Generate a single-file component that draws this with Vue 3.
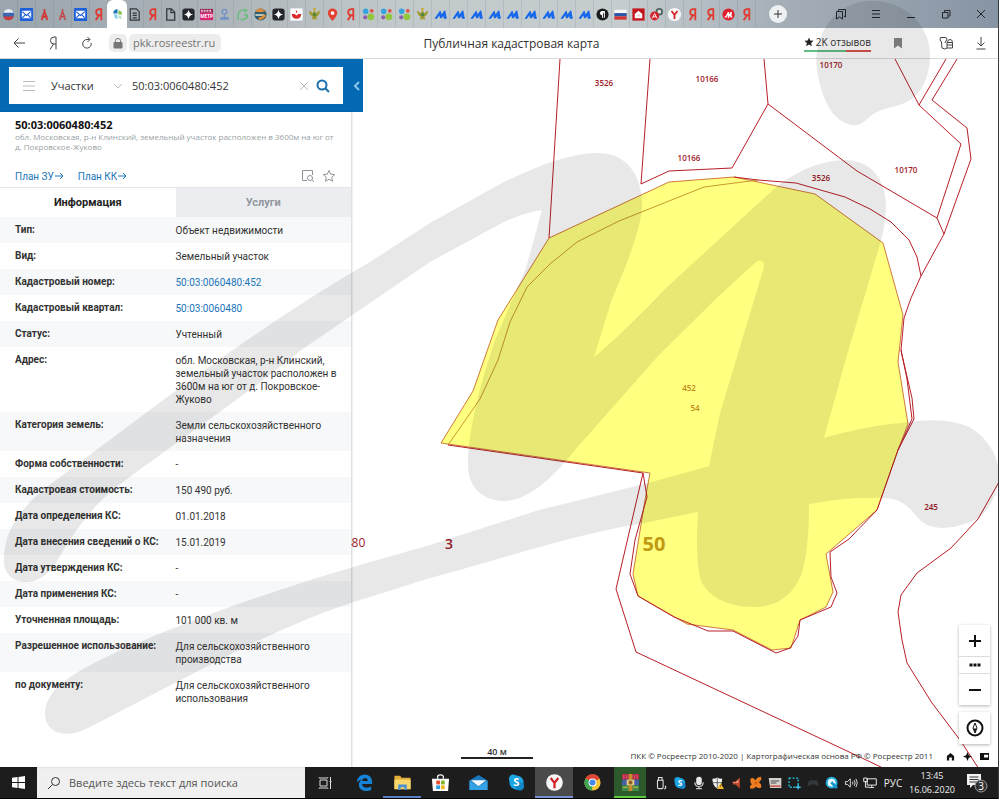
<script setup>
import { ref } from 'vue'

const tabIcons = [
  'flagball', 'mail', 'compass', 'compassdim', 'mail', 'ya', 'pkk', 'doclines', 'ya', 'doc',
  'spark', 'metr', 'person', 'arc', 'globe', 'spark', 'bowl', 'emblem', 'pin', 'ya',
  'dots', 'dots', 'dots', 'emblem', 'peak', 'peak', 'peak', 'peak', 'peak', 'peak',
  'peak', 'peak', 'peak', 'para', 'flag', 'house', 'redball', 'ybrowser', 'ya', 'ya',
  'redm', 'ya'
]
const activeTab = ref(6)

const searchType = ref('Участки')
const query = ref('50:03:0060480:452')
const taskQuery = ref('')
const section = ref('info')

const rows = [
  { label: 'Тип:', value: 'Объект недвижимости' },
  { label: 'Вид:', value: 'Земельный участок' },
  { label: 'Кадастровый номер:', value: '50:03:0060480:452', link: true },
  { label: 'Кадастровый квартал:', value: '50:03:0060480', link: true },
  { label: 'Статус:', value: 'Учтенный' },
  { label: 'Адрес:', value: 'обл. Московская, р-н Клинский, земельный участок расположен в 3600м на юг от д. Покровское-Жуково' },
  { label: 'Категория земель:', value: 'Земли сельскохозяйственного назначения' },
  { label: 'Форма собственности:', value: '-' },
  { label: 'Кадастровая стоимость:', value: '150 490 руб.' },
  { label: 'Дата определения КС:', value: '01.01.2018' },
  { label: 'Дата внесения сведений о КС:', value: '15.01.2019' },
  { label: 'Дата утверждения КС:', value: '-' },
  { label: 'Дата применения КС:', value: '-' },
  { label: 'Уточненная площадь:', value: '101 000 кв. м' },
  { label: 'Разрешенное использование:', value: 'Для сельскохозяйственного производства' },
  { label: 'по документу:', value: 'Для сельскохозяйственного использования' }
]

const parcel = '549,179 669,123 734,118 815,135 883,184 903,256 898,303 908,365 898,391 877,451 826,495 833,533 826,548 800,561 791,589 772,591 733,571 687,565 638,537 633,515 645,441 650,414 441,384 473,332 498,261'

const borders = [
  '560,0 549,179',
  '650,0 641,125 669,112 732,109 768,45 764,0',
  '768,45 857,112 937,159 944,175',
  '895,0 919,46 961,85 937,159',
  '946,0 919,46',
  '957,0 932,41 967,69 971,100 944,175 921,217',
  '734,118 758,121 796,124 845,138 870,150 891,163 909,181 917,198 921,217',
  '643,414 616,530 636,593 862,699 885,710',
  '999,423 978,460 951,489 917,514 901,536 898,553 902,581 907,604 932,644 960,681 979,710',
  '921,217 911,239 904,259 901,291 902,296 912,339 914,360 898,391 877,451 849,480 830,493 831,518 837,534 831,548 800,561 798,577 790,589 776,594 733,572 708,572 674,558 638,537 630,515 635,481 647,438 643,414 448,386',
  '901,291 907,320 912,360 898,391'
]
const innerBorder = '758,121 704,128 619,162 577,183 550,205 527,228 510,263 498,301 480,340 448,386'

const mapLabels = [
  { x: 604, y: 27, text: '3526' },
  { x: 707, y: 23, text: '10166' },
  { x: 831, y: 9, text: '10170' },
  { x: 689, y: 102, text: '10166' },
  { x: 906, y: 114, text: '10170' },
  { x: 821, y: 122, text: '3526' },
  { x: 931, y: 451, text: '245' },
  { x: 689, y: 332, text: '452', kind: 'inside' },
  { x: 695, y: 352, text: '54', kind: 'inside' },
  { x: 355, y: 488, text: '480', kind: 'block' },
  { x: 449, y: 490, text: '3', kind: 'district' },
  { x: 654, y: 492, text: '50', kind: 'region' }
]

const apps = [
  { id: 'edge', title: 'Microsoft Edge' },
  { id: 'explorer', title: 'Проводник', state: 'open' },
  { id: 'store', title: 'Microsoft Store' },
  { id: 'mailapp', title: 'Почта' },
  { id: 'skype', title: 'Skype' },
  { id: 'ybrowser', title: 'Yandex', state: 'current' },
  { id: 'chrome', title: 'Google Chrome' },
  { id: 'rar', title: 'WinRAR', state: 'green' }
]
const tray = ['usb', 'skype', 'mic', 'shield', 'horn', 'avast', 'scanner', 'snip', 'pad', 'quick', 'volume', 'net']
</script>

<template>
  <div class="screen">
    <!-- shared icon shapes -->
    <svg class="sprite" aria-hidden="true">
      <symbol id="flagball" viewBox="0 0 16 16">
        <circle cx="8" cy="8" r="6" fill="#3d66b0" />
        <path d="M2.400 6a6 6 0 0 1 11.200 0z" fill="#e9edf2" />
        <path d="M2.400 10.200h11.200a6 6 0 0 1-11.200 0z" fill="#d03a3a" />
      </symbol>
      <symbol id="mail" viewBox="0 0 16 16">
        <rect x="1" y="1" width="14" height="14" rx="1" fill="#1d5fd8" />
        <rect x="3" y="4" width="10" height="8" fill="#fff" />
        <path d="M3.500 5 8 9l4.500-4M3.500 11.500l3-3M12.500 11.500l-3-3" fill="none" stroke="#1d5fd8" stroke-width="1.200" />
      </symbol>
      <symbol id="compass" viewBox="0 0 16 16">
        <path d="M8 2v2.500M8 4.500 5 14M8 4.500l3 9.500M5 9.500q3 2 6 0" fill="none" stroke="#cf3a35" stroke-width="1.900" />
      </symbol>
      <symbol id="compassdim" viewBox="0 0 16 16">
        <path d="M8 2v2.500M8 4.500 5 14M8 4.500l3 9.500M5 9.500q3 2 6 0" fill="none" stroke="#c04a4c" stroke-width="1.600" />
      </symbol>
      <symbol id="ya" viewBox="0 0 16 16">
        <path d="M11 14V2.200H9Q5.500 2.200 5.500 5.500T9 8.800h2M8.500 9 5 14" fill="none" stroke="#e0392f" stroke-width="1.900" />
      </symbol>
      <symbol id="pkk" viewBox="0 0 16 16">
        <path d="M8 2v5H3.500A5 5 0 0 1 8 2z" fill="#1976b8" />
        <path d="M9 3.500Q12.500 4 13 8H9z" fill="#7fc04b" />
        <path d="M8 8v5Q4.500 12.500 4 8z" fill="#8ed0ea" />
        <path d="M9 9h2.500l1 4-3.500-1.500z" fill="#b9dccb" />
      </symbol>
      <symbol id="doclines" viewBox="0 0 16 16">
        <path d="M3.500 2h6.500l3 3v9H3.500zM6 6.500h4.500M6 9h4.500M6 11.500h4.500" fill="none" stroke="#33393e" stroke-width="1.300" />
      </symbol>
      <symbol id="doc" viewBox="0 0 16 16">
        <path d="M4 2h5l3.500 3.500V14H4zM8.500 2v4h4" fill="none" stroke="#33393e" stroke-width="1.400" />
      </symbol>
      <symbol id="spark" viewBox="0 0 16 16">
        <rect x="1.500" y="1.500" width="13" height="13" rx="3" fill="#23272b" />
        <path d="M8 3Q8.700 7.300 13 8 8.700 8.700 8 13 7.300 8.700 3 8 7.300 7.300 8 3z" fill="#fff" />
      </symbol>
      <symbol id="metr" viewBox="0 0 16 16">
        <path d="M1 2h14v4H1z" fill="#8d2050" />
        <path d="M2 4h12" stroke="#f0c5d6" stroke-width="2" stroke-dasharray="2 1" />
        <path d="M1 6h14v8H1z" fill="#d92372" />
      </symbol>
      <symbol id="person" viewBox="0 0 16 16">
        <circle cx="8" cy="5" r="2.500" fill="none" stroke="#7191ca" stroke-width="1.500" />
        <path d="M8 7.500v4M3.500 13q0-2 3-2h3q3 0 3 2z" fill="#7191ca" stroke="#7191ca" />
      </symbol>
      <symbol id="arc" viewBox="0 0 16 16">
        <path d="M3.500 14Q1.500 4 9 3h4M13 3l-3 3M6 13q4 1.500 7-2V8.500H9.500" fill="none" stroke="#6dbb7e" stroke-width="1.700" />
      </symbol>
      <symbol id="globe" viewBox="0 0 16 16">
        <circle cx="8" cy="8" r="6.500" fill="#2e5d73" />
        <path d="M2 5q3-4 7-3.500l5 3-6 1z" fill="#d98a3a" />
        <path d="M2 7.500h10v2H3z" fill="#b9c4bd" />
        <path d="M6 12.500q4 0 7-4" stroke="#e98b2f" stroke-width="2.500" />
      </symbol>
      <symbol id="bowl" viewBox="0 0 16 16">
        <path d="M1.500 1.500h13v13h-13z" fill="#fff" />
        <path d="M3 7.500h3l2 1.500 2-1.500h3q0 5-5 5t-5-5zM7 4l1 3 1-3" fill="#dd2c2c" />
      </symbol>
      <symbol id="emblem" viewBox="0 0 16 16">
        <path d="M2 4q3 .5 4 3l2-4 2 4q1-2.500 4-3-.5 5-4 6l1 3H5l1-3Q2.500 9 2 4z" fill="#a59b31" />
        <circle cx="8" cy="8" r="2" fill="#548b40" />
        <path d="M6.500 2h3M8 1v3" stroke="#d2a92c" stroke-width="1.500" />
      </symbol>
      <symbol id="pin" viewBox="0 0 16 16">
        <path d="M8 15Q3 9.500 3 6.500a5 5 0 0 1 10 0Q13 9.500 8 15z" fill="#e3402f" />
        <circle cx="8" cy="6.500" r="2" fill="#fff" />
      </symbol>
      <symbol id="dots" viewBox="0 0 16 16">
        <circle cx="5" cy="4.500" r="3" fill="#35a3dc" />
        <circle cx="11.500" cy="4" r="2" fill="#e0524a" />
        <circle cx="4.500" cy="11" r="2.200" fill="#8e5fb0" />
        <circle cx="10.500" cy="10.500" r="3.700" fill="#92c83e" />
      </symbol>
      <symbol id="peak" viewBox="0 0 16 16">
        <path d="M1.500 12.500 7 4.500q1-1 1.300.3l.8 3L12 4q1-1 1.200.3l1.600 8.200h-3.300L11 9.500 9.300 12H7.500l-.8-3-2.400 3.500z" fill="#1768ea" />
      </symbol>
      <symbol id="para" viewBox="0 0 16 16">
        <circle cx="8" cy="8" r="6.500" fill="#1b1d1f" />
        <path d="M8 5v6.500M10 5v6.500M10.500 4.800H7.500a1.500 1.500 0 0 0 0 3.500" fill="#fff" stroke="#fff" />
      </symbol>
      <symbol id="flag" viewBox="0 0 16 16">
        <path d="M1.500 3h13v3.500h-13z" fill="#f7f7f7" />
        <path d="M1.500 6.500h13V10h-13z" fill="#2d56a8" />
        <path d="M1.500 10h13v3.500h-13z" fill="#d33430" />
      </symbol>
      <symbol id="house" viewBox="0 0 16 16">
        <path d="M1.500 1.500h13v13h-13z" fill="#c5161d" />
        <path d="M4 7.500 8 4l4 3.500V12H4z" fill="#fff" />
        <path d="M6.500 8h3v2h-3z" fill="#f3c9ca" />
      </symbol>
      <symbol id="redball" viewBox="0 0 16 16">
        <circle cx="11" cy="5" r="4" fill="#50635e" />
        <circle cx="11" cy="5" r="2" fill="#dfe5e2" />
        <circle cx="6" cy="9.500" r="4.800" fill="#d5222b" />
        <path d="M3.500 12 6 7l2.500 5M4.500 10.500h3" fill="none" stroke="#fff" />
      </symbol>
      <symbol id="ybrowser" viewBox="0 0 16 16">
        <circle cx="8" cy="8" r="7" fill="#f7f7f7" />
        <path d="M4.800 4.200 8 8.300l3.200-4.100M8 8v4.800" fill="none" stroke="#d2232a" stroke-width="1.900" />
      </symbol>
      <symbol id="redm" viewBox="0 0 16 16">
        <circle cx="8" cy="8" r="6.500" fill="#df1f2d" />
        <path d="M4 10.500h1.500l2.500-5v5l3-5-.5 5H12" fill="none" stroke="#fff" stroke-width="1.400" />
      </symbol>

      <symbol id="edge" viewBox="0 0 20 20">
        <path d="M2 9Q3.500 1.500 10.500 1.500 18 2 18 9.500v2H7.500q.5 4 5 4 2.500 0 4.500-1.200v3.500q-2.500 1.200-5.500 1.200-7.500-.5-7.500-7 .5-4 4-5.500-4 .5-6 3.500zM7.500 8.300h6q-.2-3-3-3-2.500.2-3 3z" fill="#1583d8" />
      </symbol>
      <symbol id="explorer" viewBox="0 0 20 20">
        <path d="M1.500 3h6l1.500 2h9.500v12h-17z" fill="#e3ae38" />
        <path d="M1.500 7h17v10h-17z" fill="#f8d86c" />
        <path d="M5.500 18v-6h9v6h-2.500v-3H8v3z" fill="#4a90d2" />
      </symbol>
      <symbol id="store" viewBox="0 0 20 20">
        <path d="M7 6V4q0-2 3-2t3 2v2" fill="none" stroke="#fff" stroke-width="1.300" />
        <path d="M1 6h18l-1 13H2z" fill="#fff" />
        <path d="M5.500 8h4v4h-4z" fill="#e7502c" />
        <path d="M10.500 8h4v4h-4z" fill="#7eb62b" />
        <path d="M5.500 13h4v4h-4z" fill="#2a9fe0" />
        <path d="M10.500 13h4v4h-4z" fill="#f3b41c" />
      </symbol>
      <symbol id="mailapp" viewBox="0 0 20 20">
        <path d="M.5 8 10 2l9.500 6v10H.5z" fill="#1877bd" />
        <path d="M2 7.500h16L10 14z" fill="#f2f8fc" />
        <path d="M.5 8 10 14.500 19.500 8v10H.5z" fill="#35a3e3" />
      </symbol>
      <symbol id="skype" viewBox="0 0 20 20">
        <circle cx="10" cy="10" r="7.500" fill="#1ba5e2" />
        <circle cx="6.500" cy="6" r="4.500" fill="#1ba5e2" />
        <circle cx="13.500" cy="14" r="4.500" fill="#1287c7" />
      </symbol>
      <symbol id="chrome" viewBox="0 0 20 20">
        <circle cx="10" cy="10" r="8.500" fill="#f4c534" />
        <path d="M10 10 2.600 5.800A8.500 8.500 0 0 1 17.600 6z" fill="#df4534" />
        <path d="M10 10 2.600 5.800A8.500 8.500 0 0 0 9.500 18.500z" fill="#3fa455" />
        <circle cx="10" cy="10" r="4.200" fill="#fff" />
        <circle cx="10" cy="10" r="3.200" fill="#4488e8" />
      </symbol>
      <symbol id="rar" viewBox="0 0 20 20">
        <path d="M1 1h18v6H1z" fill="#b3294b" />
        <path d="M1 7h18v6H1z" fill="#4660a8" />
        <path d="M1 13h18v6H1z" fill="#3e8b49" />
        <path d="M8 1h4v18H8z" fill="#c88a2f" />
        <path d="M3 2v4M6 2v4M14 2v4M17 2v4" stroke="#df5d69" />
        <path d="M6 7h8v6H6z" fill="#ead18a" />
        <path d="M8 8h4v4H8z" fill="#8d6126" />
        <path d="M2 15h5M13 15h5" stroke="#d7c645" />
      </symbol>

      <symbol id="usb" viewBox="0 0 20 20">
        <path d="M5 6h8v10q0 2-2 2H7q-2 0-2-2zM6.500 6V2h5v4M16 14q2 3-1 5" fill="none" stroke="#e4e4e4" stroke-width="1.500" />
      </symbol>
      <symbol id="mic" viewBox="0 0 20 20">
        <rect x="6" y="1" width="8" height="12" rx="4" fill="#e8e8e8" />
        <path d="M4 9q0 6 6 6t6-6M10 15v3M6 18h8" fill="none" stroke="#cfcfcf" stroke-width="1.700" />
      </symbol>
      <symbol id="shield" viewBox="0 0 20 20">
        <path d="M2 4q5 0 7-2 2 2 7 2 0 10-7 14Q2 14 2 4z" fill="#f1f1f1" />
        <path d="M9 3v14M2.500 9.500h13" stroke="#333" />
        <path d="m13.500 10 5 8.500h-10z" fill="#f4b82d" />
        <path d="M13.500 13v2.500" stroke="#4b3300" />
      </symbol>
      <symbol id="horn" viewBox="0 0 20 20">
        <path d="M4 8h4l6-6v16l-6-6H4z" fill="#c7492f" />
        <path d="M4 9h4l4-4v5H4z" fill="#eb8e70" />
      </symbol>
      <symbol id="avast" viewBox="0 0 20 20">
        <path d="M2 4q4-3 7 2l1-1q2-4 7-4 2 3-1 6l-2 2q5 3 3 8-5 1-7-2-3 4-8 3-2-4 2-6Q1 9 2 4z" fill="#ef7d22" />
        <circle cx="10" cy="10" r="2.500" fill="#d9630f" />
      </symbol>
      <symbol id="scanner" viewBox="0 0 20 20">
        <path d="M1 3h18v14H3z" fill="#d4d0ce" />
        <path d="M4 7h12M4 10h8" stroke="#4d4d4d" stroke-width="1.500" />
        <path d="M3 14.500h15" stroke="#c8493b" stroke-width="2" />
      </symbol>
      <symbol id="snip" viewBox="0 0 20 20">
        <path d="M3 3h13v13H3z" fill="none" stroke="#24b4cf" stroke-width="2" stroke-dasharray="3 2" />
        <path d="M16 12v7M12.500 16h7" stroke="#3cc3ea" stroke-width="2" />
      </symbol>
      <symbol id="pad" viewBox="0 0 20 20">
        <path d="M2 14q1-8 4-8h8q3 0 4 8-3 1-4-2H6q-1 3-4 2z" fill="#34383d" />
      </symbol>
      <symbol id="quick" viewBox="0 0 20 20">
        <circle cx="9.500" cy="9.500" r="7" fill="#eefaff" stroke="#25aee0" stroke-width="3" />
        <path d="m9 9 8 8" stroke="#1797cc" stroke-width="4" />
      </symbol>
      <symbol id="volume" viewBox="0 0 20 20">
        <path d="M2 8h3l4-4v12l-4-4H2zM12 8q1.500 2 0 4M14.500 6q3 4 0 8M17 4q4 6 0 12" fill="none" stroke="#e9e9e9" stroke-width="1.300" />
      </symbol>
      <symbol id="net" viewBox="0 0 20 20">
        <path d="M6 4h13v9H6zM12.500 13v3M9 16.500h7M1 3h5v5H1zM3.500 8v8H9" fill="none" stroke="#e9e9e9" stroke-width="1.400" />
      </symbol>
    </svg>

    <header class="tabstrip">
      <nav class="tabs" aria-label="Вкладки">
        <button
          v-for="(icon, i) in tabIcons"
          :key="i"
          type="button"
          class="tab"
          :class="{ active: i === activeTab }"
          :aria-label="'Вкладка ' + (i + 1)"
          @click="activeTab = i"
        >
          <svg class="tab-icon" viewBox="0 0 16 16">
            <use :href="'#' + icon" />
            <text v-if="icon === 'metr'" x="8" y="12" class="glyph metr">МЕТР</text>
          </svg>
        </button>
      </nav>
      <button type="button" class="new-tab" aria-label="Новая вкладка">
        <svg viewBox="0 0 12 12"><path d="M6 2v8M2 6h8" /></svg>
      </button>
      <div class="window-buttons">
        <button type="button" aria-label="Коллекции">
          <svg viewBox="0 0 14 14"><path d="M4.500 4V2.500h7V10L10 9M2.500 4.500h6V12l-3-2-3 2z" /></svg>
        </button>
        <button type="button" aria-label="Меню">
          <svg viewBox="0 0 14 14"><path d="M3 3.500h8M3 7h8M3 10.500h8" /></svg>
        </button>
        <button type="button" aria-label="Свернуть">
          <svg viewBox="0 0 14 14"><path d="M3 10.500h8" /></svg>
        </button>
        <button type="button" aria-label="Развернуть">
          <svg viewBox="0 0 14 14"><path d="M5.500 5V3.500h5.500V9H9.500M3.500 5.500H9V11H3.500z" /></svg>
        </button>
        <button type="button" aria-label="Закрыть">
          <svg viewBox="0 0 14 14"><path d="m3 3 8 8M11 3l-8 8" /></svg>
        </button>
      </div>
    </header>

    <div class="toolbar">
      <div class="tools-left">
        <button type="button" class="tool" aria-label="Назад">
          <svg viewBox="0 0 16 16"><path d="M14 8H3M7.500 3.500 3 8l4.500 4.500" /></svg>
        </button>
        <button type="button" class="tool" aria-label="Яндекс">
          <svg viewBox="0 0 16 16"><path d="M11 14.500V2H9Q5.500 2 5.500 5.500T9 9h2M8.500 9 5 14.500" /></svg>
        </button>
        <button type="button" class="tool" aria-label="Обновить">
          <svg viewBox="0 0 16 16"><path d="M12.200 8A4.300 4.300 0 1 1 8 4.500h2.500M8.500 2l2.500 2.500L8.500 7" /></svg>
        </button>
        <span class="lock">
          <svg viewBox="0 0 12 12"><path d="M2 5.500h8V11H2z" fill="#777" /><path d="M3.500 6V3.500Q3.500 1.500 6 1.500t2.500 2V6" /></svg>
        </span>
        <a class="host" href="#">pkk.rosreestr.ru</a>
      </div>
      <h1 class="page-title">Публичная кадастровая карта</h1>
      <div class="tools-right">
        <a class="reviews" href="#">
          <svg viewBox="0 0 12 12"><path d="m6 .5 1.500 3.700 4 .3-3 2.600 1 3.900L6 8.900 2.500 11l1-3.900-3-2.600 4-.3z" fill="#222" /></svg>
          2K отзывов
        </a>
        <button type="button" class="tool" aria-label="Закладка">
          <svg viewBox="0 0 16 16"><path d="M4 3h8v10.500l-4-3-4 3z" class="solid" /></svg>
        </button>
        <button type="button" class="tool wide" aria-label="Расширения">
          <svg viewBox="0 0 16 16"><path d="M8 2.500H2.500Q1 5 3.500 7l.5 6q3 2 5 0M8 2.500q2 1.500 0 3.500L7 8M9 7.500h5.500V13H9zM9.500 7.500q0-3 2.500-3t2.500 3M9 10h5.500" /></svg>
        </button>
        <button type="button" class="tool" aria-label="Загрузки">
          <svg viewBox="0 0 16 16"><path d="M8 2v9M4.500 7.500 8 11l3.500-3.500M3.500 14h9" /></svg>
        </button>
      </div>
    </div>

    <main class="workspace">
      <svg class="map">
        <polygon :points="parcel" class="parcel" />
        <polyline :points="innerBorder" class="inner" />
        <polyline v-for="(line, i) in borders" :key="i" :points="line" class="border" />
        <text
          v-for="label in mapLabels"
          :key="label.text + label.x"
          :x="label.x" :y="label.y"
          class="map-label"
          :class="label.kind"
        >{{ label.text }}</text>
      </svg>

      <aside class="sidebar">
        <form class="search" @submit.prevent>
          <div class="search-box">
            <button type="button" class="plain" aria-label="Меню карты">
              <svg class="icon-burger" viewBox="0 0 14 14"><path d="M1 2.500h12M1 7h12M1 11.500h12" /></svg>
            </button>
            <div class="type-wrap">
              <select v-model="searchType" aria-label="Тип объекта">
                <option>Участки</option>
                <option>ОКС</option>
              </select>
              <svg class="icon-chevron" viewBox="0 0 10 10"><path d="m1 3 4 4 4-4" /></svg>
            </div>
            <input v-model="query" type="text" aria-label="Поиск по номеру">
            <button type="button" class="plain" aria-label="Очистить" @click="query = ''">
              <svg class="icon-clear" viewBox="0 0 10 10"><path d="m1 1 8 8M9 1 1 9" /></svg>
            </button>
            <button type="submit" class="plain" aria-label="Найти">
              <svg class="icon-search" viewBox="0 0 14 14"><circle cx="6" cy="6" r="4.500" /><path d="m9 9 4 4" /></svg>
            </button>
          </div>
          <button type="button" class="plain collapse" aria-label="Скрыть панель">
            <svg viewBox="0 0 8 12"><path d="M6 2 2 6l4 4" /></svg>
          </button>
        </form>

        <section class="panel">
          <div class="summary">
            <h2>50:03:0060480:452</h2>
            <p>обл. Московская, р-н Клинский, земельный участок расположен в 3600м на юг от д. Покровское-Жуково</p>
            <div class="plan-row">
              <a href="#">План ЗУ<svg viewBox="0 0 10 10"><path d="M1 5h8M6 2l3 3-3 3" /></svg></a>
              <a href="#">План КК<svg viewBox="0 0 10 10"><path d="M1 5h8M6 2l3 3-3 3" /></svg></a>
              <div class="plan-tools">
                <button type="button" class="plain" aria-label="Показать на карте">
                  <svg viewBox="0 0 14 14"><path d="M6 11.500H1.500v-10h10V6" /><circle cx="9" cy="9" r="2.500" /><path d="m11 11 2 2" /></svg>
                </button>
                <button type="button" class="plain" aria-label="В избранное">
                  <svg viewBox="0 0 14 14"><path d="m7 1.500 1.700 3.700 4 .4-3 2.700.9 4L7 10.300l-3.600 2 .9-4-3-2.700 4-.4z" /></svg>
                </button>
              </div>
            </div>
          </div>

          <div class="sections">
            <button type="button" :class="{ on: section === 'info' }" @click="section = 'info'">Информация</button>
            <button type="button" :class="{ on: section === 'services' }" @click="section = 'services'">Услуги</button>
          </div>

          <table class="facts">
            <tbody>
              <tr v-for="row in rows" :key="row.label">
                <th scope="row">{{ row.label }}</th>
                <td>
                  <a v-if="row.link" href="#">{{ row.value }}</a>
                  <template v-else>{{ row.value }}</template>
                </td>
              </tr>
            </tbody>
          </table>
        </section>
      </aside>

      <div class="map-controls">
        <div class="zoom">
          <button type="button" aria-label="Приблизить">
            <svg viewBox="0 0 14 14"><path d="M7 1v12M1 7h12" /></svg>
          </button>
          <button type="button" class="short" aria-label="Масштаб">
            <svg viewBox="0 0 14 14"><path d="M1.500 7h3M5.500 7h3M9.500 7h3" class="fat" /></svg>
          </button>
          <button type="button" aria-label="Отдалить">
            <svg viewBox="0 0 14 14"><path d="M1 7h12" /></svg>
          </button>
        </div>
        <button type="button" class="locate" aria-label="Компас">
          <svg viewBox="0 0 18 18"><circle cx="9" cy="9" r="7.500" /><path d="m9 4 2 5-2 5-2-5z" class="needle" /><path d="m7.500 9.500 1.500 4 1.500-4z" class="ink" /></svg>
        </button>
      </div>

      <div class="scale">40 м</div>

      <footer class="credits">
        <span>ПКК © Росреестр 2010-2020 | Картографическая основа РФ © Росреестр 2011</span>
        <svg viewBox="0 0 10 10"><path d="M1 9.500V4.500L5 1l4 3.500v5H6.500V6h-3v3.500z" /></svg>
        <svg viewBox="0 0 10 10"><path d="M5 0 6.500 3.500 10 5 6.500 6.500 5 10 3.500 6.500 0 5l3.500-1.500z" /></svg>
        <svg viewBox="0 0 10 10"><path d="M0 1h10v8H0zM4.500 3v3H9V3z" fill-rule="evenodd" /></svg>
      </footer>
    </main>

    <footer class="taskbar">
      <button type="button" class="start" aria-label="Пуск">
        <svg viewBox="0 0 14 14"><path d="M0 2 6 1v5.500H0zM7 1l7-1v6.500H7zM0 7.500h6V13l-6-1zM7 7.500h7V14l-7-1z" fill="#fff" /></svg>
      </button>
      <label class="task-search">
        <svg viewBox="0 0 14 14"><circle cx="8.500" cy="5.500" r="4" /><path d="M5.500 8.500 1 13" /></svg>
        <input v-model="taskQuery" type="text" placeholder="Введите здесь текст для поиска">
      </label>
      <button type="button" class="task-view" aria-label="Представление задач">
        <svg viewBox="0 0 14 14"><path d="M2 4h7v6H2zM1 1.500V2h9v-.5M1 12.500V12h9v.5M12.500 1v12M11.500 5.500h2" /></svg>
      </button>
      <button
        v-for="app in apps"
        :key="app.id"
        type="button"
        class="app"
        :class="app.state"
        :aria-label="app.title"
      >
        <svg viewBox="0 0 20 20">
          <use :href="'#' + app.id" />
          <text v-if="app.id === 'skype'" x="10" y="14" class="glyph skype">S</text>
        </svg>
      </button>
      <div class="tray">
        <svg v-for="item in tray" :key="item" viewBox="0 0 20 20">
          <use :href="'#' + item" />
          <text v-if="item === 'skype'" x="10" y="14" class="glyph skype">S</text>
        </svg>
      </div>
      <button type="button" class="lang">РУС</button>
      <time class="clock" datetime="2020-06-16T13:45">13:45<br>16.06.2020</time>
      <button type="button" class="notices" aria-label="Уведомления">
        <svg viewBox="0 0 24 22">
          <path d="M2 2h14v11H8l-3 3v-3H2z" fill="#f3f3f3" />
          <path d="M4.500 5h9M4.500 7.500h9M4.500 10h9" stroke="#333" />
          <circle cx="16" cy="14" r="6" fill="#333" stroke="#9a9a9a" />
          <text x="16" y="18" class="glyph count">3</text>
        </svg>
      </button>
    </footer>

    <!-- translucent mark over the whole screen -->
    <svg class="overlay" aria-hidden="true">
      <path
        d="M4 557C5 520 35 495 60 477C150 410 260 325 370 262L430 223L502 183C540 165 570 153 600 153
           C627 154 642 175 642 205C642 230 622 275 611 302L594 357C610 345 645 310 666 288L775 188
           C800 168 825 160 847 160C873 162 885 180 886 205C886 230 878 250 873 268L847 355L824 438
           C855 429 885 424 902 423C930 418 960 420 974 430C992 443 999 460 999 476C997 500 985 518 967 523
           C950 530 930 530 920 520C912 512 905 498 884 498C850 497 830 501 809 504
           C809 535 807 555 802 573C792 598 775 607 753 607C720 607 701 590 699 573C696 550 697 530 698 512
           L644 523C570 535 500 560 430 578L370 597C320 612 280 630 233 653L90 727C62 742 44 730 45 713
           C46 690 70 675 100 660C180 622 280 588 370 562L430 545L539 510L648 483L709 466L720 413L742 340L764 267
           Q764 258 756 262L720 295L659 355L575 450C555 475 530 501 503 501C480 500 468 485 468 465
           C468 430 480 385 495 340L526 268L542 210Q525 212 502 223L430 262L370 303L300 351
           C250 392 180 440 123 482C97 500 75 530 60 556C48 578 34 583 23 582C8 580 3 570 4 557Z"
      />
      <path d="M817 70C812 35 835 2 870 1C905 0 930 25 930 55C930 85 915 103 892 107C865 112 868 127 851 125C830 120 821 95 817 70Z" />
    </svg>
  </div>
</template>

<style>
body {
  margin: 0;
}
</style>

<style scoped>
.screen {
  position: relative;
  display: flex;
  flex-direction: column;
  height: 100vh;
  box-sizing: border-box;
  border-right: 1px solid #343a40;
  overflow: hidden;
  background: #fff;
  color: #333;
  font-family: "Open Sans", "Noto Sans", sans-serif;
  font-size: 11px;
}
.sprite {
  position: absolute;
  width: 0;
  height: 0;
}
button,
input,
select {
  margin: 0;
  padding: 0;
  border: 0;
  background: none;
  color: inherit;
  font: inherit;
}
button {
  display: flex;
  align-items: center;
  justify-content: center;
}
a {
  color: #1b75b9;
  text-decoration: none;
}
svg {
  flex: none;
  fill: none;
}
.glyph {
  fill: #fff;
  font-weight: 700;
  text-anchor: middle;
}
.metr {
  font-size: 5px;
}
.skype {
  font-size: 12px;
}
.count {
  font-size: 10px;
  font-weight: 400;
}

/* browser chrome */
.tabstrip {
  display: flex;
  flex: none;
  align-items: center;
  height: 28px;
  background: linear-gradient(90deg, #9aa5ad 0, #abb3b8 20%, #c2c9cb 40%, #c5cdcf 62%, #a5afb8 78%, #8794a3 100%);
}
.tabs {
  display: flex;
  align-self: stretch;
}
.tab {
  width: 18px;
  border-right: 1px solid rgba(90, 100, 110, 0.15);
}
.tab.active {
  width: 20px;
  margin: 0 -1px;
  border: 0;
  border-radius: 6px 6px 0 0;
  background: #fff;
}
.tab-icon {
  width: 15px;
  height: 15px;
}
.new-tab {
  width: 18px;
  height: 18px;
  margin-left: 13px;
  border-radius: 50%;
  background: #eef1f2;
}
.new-tab svg {
  width: 12px;
  height: 12px;
  stroke: #333;
}
.window-buttons {
  display: flex;
  align-self: stretch;
  margin-left: auto;
}
.window-buttons button {
  width: 35px;
}
.window-buttons svg {
  width: 14px;
  height: 14px;
  stroke: #20262c;
}
.toolbar {
  display: grid;
  grid-template-columns: 17fr auto 16fr;
  flex: none;
  align-items: center;
  height: 31px;
  box-sizing: border-box;
  border-bottom: 1px solid #d9d9d9;
}
.tools-left,
.tools-right {
  display: flex;
  align-items: center;
}
.tools-left {
  padding-left: 2px;
}
.tools-right {
  justify-content: flex-end;
}
.tool {
  width: 34px;
  height: 24px;
}
.tool.wide {
  width: 48px;
  padding-left: 12px;
  box-sizing: border-box;
}
.tools-right .tool:first-of-type {
  width: 36px;
  margin-left: 9px;
}
.tool svg {
  width: 16px;
  height: 16px;
  stroke: #444;
}
.tool .solid {
  fill: #858585;
  stroke: none;
}
.lock,
.host {
  height: 18px;
  border-radius: 5px;
  background: #ededed;
}
.lock {
  display: flex;
  align-items: center;
  justify-content: center;
  width: 18px;
  margin-left: 5px;
}
.lock svg {
  width: 12px;
  height: 12px;
  stroke: #777;
}
.host {
  margin-left: 2px;
  padding: 0 6px 0 4px;
  color: #737373;
  font-size: 11px;
  line-height: 17px;
}
.page-title {
  margin: 0;
  color: #333;
  font-size: 12px;
  font-weight: 400;
}
.reviews {
  display: flex;
  align-items: center;
  gap: 2px;
  padding-bottom: 1px;
  border-bottom: 2px solid;
  border-image: linear-gradient(90deg, #62bf85 62%, #d9534f 62%) 1;
  color: #333;
  font-size: 10px;
  line-height: 14px;
}
.reviews svg {
  width: 10px;
  height: 10px;
}

/* map */
.workspace {
  position: relative;
  display: flex;
  flex: 1;
  min-height: 0;
}
.map {
  position: absolute;
  inset: 0;
  width: 100%;
  height: 100%;
}
.border {
  stroke: #b81f28;
}
.parcel {
  fill: #ffff80;
  stroke: #d07b3a;
}
.inner {
  stroke: #c99a33;
}
.map-label {
  fill: #a02028;
  font-size: 8px;
  font-weight: 600;
  text-anchor: middle;
}
.map-label.inside {
  fill: #c08a1c;
}
.map-label.block {
  font-size: 12px;
  font-weight: 400;
}
.map-label.district {
  font-size: 14px;
}
.map-label.region {
  fill: #c09a12;
  font-size: 20px;
  font-weight: 700;
}

/* left panel */
.sidebar {
  position: relative;
  display: flex;
  flex-direction: column;
  width: 363px;
  font-family: Roboto, "Noto Sans", sans-serif;
}
.search {
  display: flex;
  flex: none;
  align-items: center;
  height: 53px;
  box-sizing: border-box;
  padding-left: 9px;
  background: #0369b2;
  font-family: "Open Sans", "Noto Sans", sans-serif;
}
.search-box {
  display: flex;
  flex: 1;
  align-items: center;
  height: 37px;
  padding: 0 13px;
  background: #fff;
}
.search-box input {
  flex: 1;
  min-width: 0;
  margin-left: 9px;
  color: #333;
}
.type-wrap {
  display: flex;
  align-items: center;
  width: 72px;
  margin-left: 15px;
}
.type-wrap select {
  flex: 1;
  min-width: 0;
  appearance: none;
}
.icon-burger,
.icon-search {
  width: 14px;
  height: 14px;
}
.icon-burger,
.icon-chevron,
.icon-clear {
  stroke: #bbb;
}
.icon-chevron,
.icon-clear {
  width: 10px;
  height: 10px;
}
.icon-search {
  margin-left: 7px;
  stroke: #1b6fae;
  stroke-width: 2;
}
.collapse {
  width: 20px;
  padding-left: 8px;
  box-sizing: border-box;
}
.collapse svg {
  width: 8px;
  height: 12px;
  stroke: #8ec5ea;
  stroke-width: 2;
}
.panel {
  flex: 1;
  min-height: 0;
  margin-right: 12px;
  background: #fff;
  box-shadow: 1px 0 2px rgba(0, 0, 0, 0.18);
}
.summary {
  padding: 5px 15px 0;
}
.summary h2 {
  margin: 0;
  color: #111;
  font-family: "Open Sans", sans-serif;
  font-size: 11px;
  line-height: 15px;
}
.summary p {
  margin: 0;
  color: #999fa5;
  font-family: "Open Sans", "Noto Sans", sans-serif;
  font-size: 8px;
  line-height: 10px;
}
.plan-row {
  display: flex;
  align-items: center;
  gap: 14px;
  height: 22px;
  margin-top: 13px;
  font-size: 10px;
}
.plan-row a {
  display: flex;
  align-items: center;
}
.plan-row a svg {
  width: 10px;
  height: 10px;
  stroke: #1b75b9;
}
.plan-tools {
  display: flex;
  gap: 7px;
  margin-left: auto;
}
.plan-tools svg {
  width: 14px;
  height: 14px;
  stroke: #8f959b;
}
.sections {
  display: flex;
  border-top: 1px solid #e3e5e8;
}
.sections button {
  flex: 1;
  height: 29px;
  background: #ebedf1;
  color: #92979d;
  font-weight: 700;
}
.sections button.on {
  background: #fff;
  color: #222;
}
.facts {
  width: 100%;
  border-collapse: collapse;
  table-layout: fixed;
  line-height: 13px;
}
.facts tr:nth-child(odd) {
  background: #f7f8f9;
}
.facts th,
.facts td {
  padding: 7px 0 6px;
  text-align: left;
  vertical-align: top;
}
.facts th {
  padding: 6px 0 7px 15px;
  color: #333;
  font-size: 10px;
  font-weight: 700;
  white-space: nowrap;
}
.facts td {
  padding-right: 14px;
  font-size: 10px;
}

/* map overlays */
.map-controls {
  position: absolute;
  right: 8px;
  bottom: 23px;
  display: flex;
  flex-direction: column;
  gap: 7px;
}
.zoom,
.locate {
  width: 31px;
  background: #fff;
  box-shadow: 0 1px 3px rgba(0, 0, 0, 0.3);
}
.zoom button {
  width: 31px;
  height: 31px;
}
.zoom .short {
  height: 18px;
  box-sizing: border-box;
  border: solid #ddd;
  border-width: 1px 0;
}
.zoom svg {
  width: 14px;
  height: 14px;
  stroke: #111;
  stroke-width: 2;
}
.zoom .fat {
  stroke-width: 3;
}
.locate {
  height: 32px;
}
.locate svg {
  width: 18px;
  height: 18px;
  stroke: #111;
  stroke-width: 2;
}
.locate .needle {
  stroke-width: 1;
}
.locate .ink {
  fill: #111;
  stroke: none;
}
.scale {
  position: absolute;
  left: 461px;
  bottom: 8px;
  width: 72px;
  border-bottom: 2px solid #222;
  font-size: 9px;
  font-weight: 600;
  line-height: 10px;
  text-align: center;
}
.credits {
  position: absolute;
  right: 9px;
  bottom: 4px;
  display: flex;
  align-items: center;
  gap: 8px;
  font-size: 8px;
  line-height: 14px;
}
.credits span {
  margin-right: 5px;
}
.credits svg {
  width: 9px;
  height: 9px;
  fill: #111;
}

/* taskbar */
.taskbar {
  display: flex;
  flex: none;
  height: 32px;
  box-sizing: border-box;
  border-bottom: 1px solid #000;
  background: #1d1d1d;
  color: #eee;
}
.start {
  width: 37px;
}
.start svg {
  width: 13px;
  height: 13px;
}
.task-search {
  display: flex;
  flex: 0 0 268px;
  align-items: center;
  gap: 8px;
  box-sizing: border-box;
  padding: 0 10px;
  background: #f0f0f0;
}
.task-search svg {
  width: 14px;
  height: 14px;
  stroke: #333;
}
.task-search input {
  flex: 1;
  min-width: 0;
  color: #333;
  font-size: 11px;
}
.task-search input::placeholder {
  color: #555;
  opacity: 1;
}
.task-view {
  width: 40px;
}
.task-view svg {
  width: 14px;
  height: 14px;
  stroke: #ddd;
}
.app {
  width: 38px;
  box-sizing: border-box;
  border: solid transparent;
  border-width: 2px 0;
}
.app svg {
  width: 19px;
  height: 19px;
}
.app.open {
  border-bottom-color: #5c7fc4;
}
.app.current {
  border-bottom-color: #7390cf;
  background: #4a4a4a;
}
.app.green {
  width: 32px;
  margin: 0 3px;
  border-bottom-color: #5fc93f;
  background: #2d5a2b;
}
.tray {
  display: flex;
  align-items: center;
  gap: 5px;
  margin-left: auto;
}
.tray svg {
  width: 14px;
  height: 14px;
}
.lang {
  width: 32px;
  font-size: 10px;
}
.clock {
  width: 46px;
  font-size: 9px;
  line-height: 14px;
  padding-top: 2px;
  text-align: center;
}
.notices {
  width: 43px;
}
.notices svg {
  width: 24px;
  height: 22px;
}

.overlay {
  position: absolute;
  inset: 0;
  width: 100%;
  height: 100%;
  fill: rgba(0, 0, 0, 0.09);
  pointer-events: none;
}
</style>
